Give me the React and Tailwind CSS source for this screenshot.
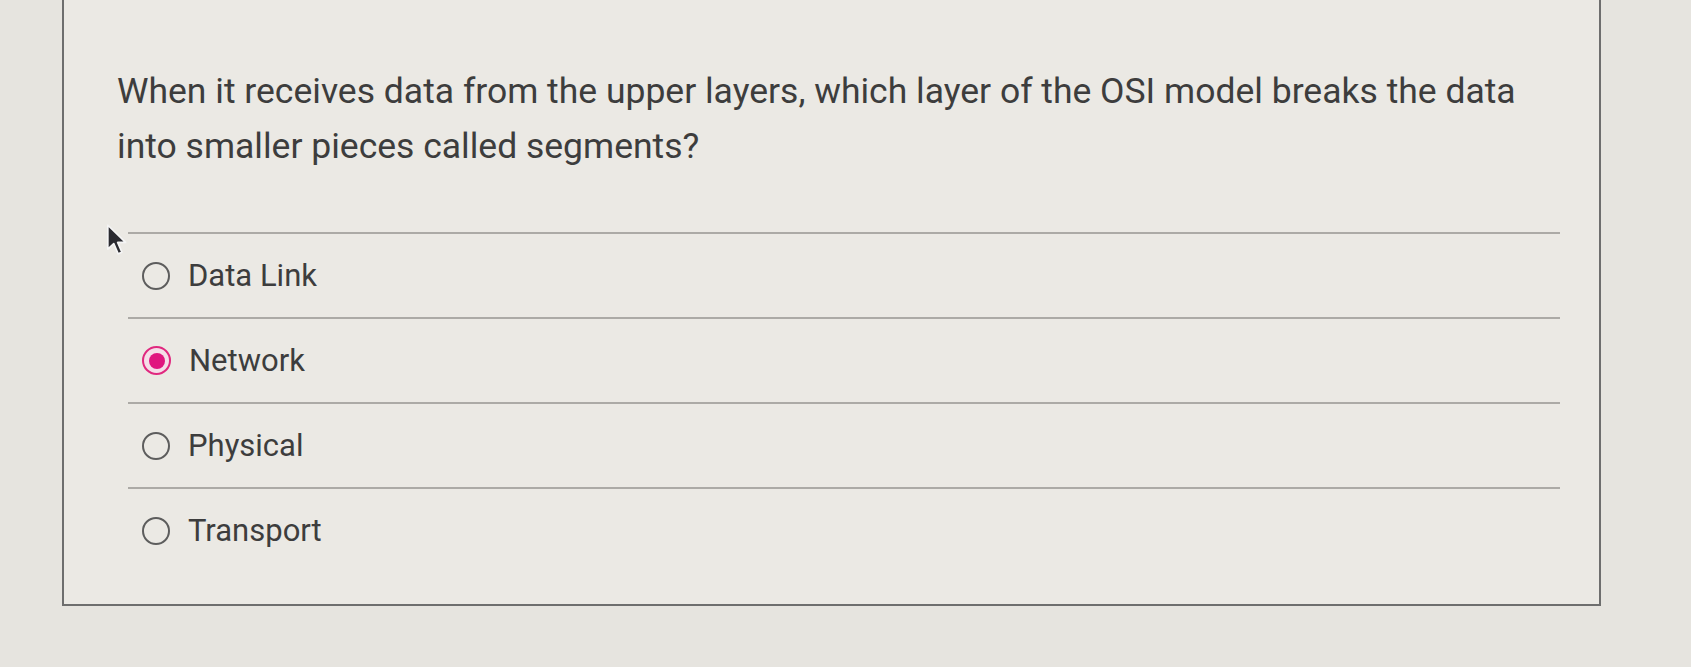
const options = [
  { label: "Data Link", checked: false },
  { label: "Network", checked: true },
  { label: "Physical", checked: false },
  { label: "Transport", checked: false },
];

const Radio = ({ checked }) =>
  checked ? (
    <span className="flex h-[29px] w-[29px] items-center justify-center rounded-full border-2 border-[#e0287f] bg-[#f5dde8]">
      <span className="h-[16px] w-[16px] rounded-full bg-[#e0157f]" />
    </span>
  ) : (
    <span className="h-[28px] w-[28px] rounded-full border-[2.5px] border-[#5d5d5d]" />
  );

const Cursor = () => (
  <svg
    className="absolute left-[106px] top-[223px]"
    width="24"
    height="34"
    viewBox="0 0 13 18"
  >
    <path
      d="M1 1 L1 14 L4.2 11 L6.6 16.5 L8.6 15.6 L6.3 10.3 L10.6 10.3 Z"
      fill="#2a2a30"
      stroke="#f5f5f5"
      strokeWidth="0.9"
      strokeLinejoin="round"
    />
  </svg>
);

export default function App() {
  return (
    <div
      className="relative h-[667px] w-full overflow-hidden bg-[#e6e4df] text-[#3d3d3d]"
      style={{ fontFamily: "Roboto, 'Liberation Sans', sans-serif" }}
    >
      <div className="ml-[62px] mr-[90px] h-[606px] border-x-2 border-b-2 border-[#6e6e6e] bg-[#ebe9e4] pl-[53px] pr-[39px] pt-[64px]">
        <p className="text-[35.5px] leading-[55px]">
          When it receives data from the upper layers, which layer of the OSI model breaks the data into smaller pieces called segments?
        </p>

        <div className="ml-[11px] mt-[58px]">
          {options.map((o) => (
            <div
              key={o.label}
              className="flex h-[85px] items-center gap-[18px] border-t-2 border-[#acaaa6] pl-[14px]"
            >
              <Radio checked={o.checked} />
              <span className="text-[31px] leading-none">{o.label}</span>
            </div>
          ))}
        </div>
      </div>
      <Cursor />
    </div>
  );
}
